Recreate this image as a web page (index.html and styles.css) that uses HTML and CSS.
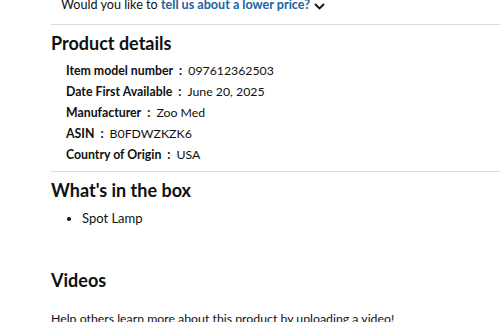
FILE: index.html
```html
<!DOCTYPE html>
<html>
<head>
<meta charset="utf-8">
<link rel="stylesheet" href="styles.css">
</head>
<body>
<div class="page">
  <div class="price-line">Would you like to <a class="link" href="#">tell us about a lower price?</a>
    <svg class="chev" width="11" height="7" viewBox="0 0 11 7"><path d="M1 1 L5.5 5.5 L10 1" fill="none" stroke="#0f1111" stroke-width="1.8"/></svg>
  </div>
  <hr class="divider">
  <section class="details">
    <h2 class="heading">Product details</h2>
    <ul class="detail-list">
      <li class="detail-row"><span class="label">Item model number</span><span class="sep">:</span><span class="value">097612362503</span></li>
      <li class="detail-row"><span class="label">Date First Available</span><span class="sep">:</span><span class="value">June 20, 2025</span></li>
      <li class="detail-row"><span class="label">Manufacturer</span><span class="sep">:</span><span class="value">Zoo Med</span></li>
      <li class="detail-row"><span class="label">ASIN</span><span class="sep">:</span><span class="value">B0FDWZKZK6</span></li>
      <li class="detail-row"><span class="label">Country of Origin</span><span class="sep">:</span><span class="value">USA</span></li>
    </ul>
  </section>
  <hr class="divider">
  <section class="box">
    <h2 class="heading">What's in the box</h2>
    <ul class="box-list">
      <li>Spot Lamp</li>
    </ul>
  </section>
  <section class="videos">
    <h2 class="heading">Videos</h2>
    <p class="help">Help others learn more about this product by uploading a video!</p>
  </section>
</div>
</body>
</html>
```

FILE: styles.css
```css
html, body {
  margin: 0;
  padding: 0;
  background: #fff;
}
body {
  font-family: Lato, "Liberation Sans", sans-serif;
  color: #0f1111;
  font-size: 14px;
  overflow: hidden;
}
.page {
  padding-left: 51px;
}
.price-line {
  margin-top: -5px;
  padding-left: 10px;
  font-size: 12.6px;
  line-height: 20px;
  display: flex;
  align-items: center;
  white-space: pre;
}
.link {
  color: #2162a1;
  font-weight: 700;
  text-decoration: none;
}
.chev {
  margin-left: 4px;
  margin-top: 2px;
}
.divider {
  border: 0;
  border-top: 1px solid #dcdcdc;
  margin: 9px 0 0 0;
  height: 0;
}
.heading {
  font-size: 18px;
  font-weight: 700;
  line-height: 24px;
  margin: 0;
}
.details .heading {
  margin-top: 6px;
}
.detail-list {
  list-style: none;
  margin: 5px 0 0 0;
  padding: 0 0 0 15px;
}
.detail-row {
  font-size: 12.3px;
  line-height: 21px;
}
.label {
  font-weight: 700;
}
.sep {
  font-weight: 700;
  margin: 0 6px;
}
.details + .divider {
  margin-top: 6px;
}
.box .heading {
  margin-top: 6px;
}
.box-list {
  margin: 6px 0 0 0;
  padding-left: 31px;
  font-size: 13px;
  line-height: 21px;
}
.videos .heading {
  margin-top: 39px;
}
.help {
  margin: 17px 0 0 0;
  font-size: 12.3px;
  line-height: 20px;
}
```
